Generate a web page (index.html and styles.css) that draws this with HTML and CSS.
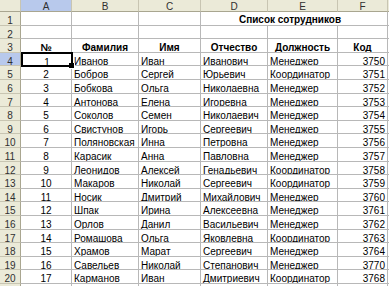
FILE: index.html
```html
<!DOCTYPE html>
<html lang="ru">
<head>
<meta charset="utf-8">
<title>Список сотрудников</title>
<link rel="stylesheet" href="styles.css">
</head>
<body>
<div class="sheet">
  <div class="ch corner"></div><div class="ch sel">A</div><div class="ch">B</div><div class="ch">C</div><div class="ch">D</div><div class="ch">E</div><div class="ch">F</div><div class="ch"></div>

  <div class="rh">1</div><div></div><div></div><div></div><div class="title">Список сотрудников</div><div></div>
  <div class="rh">2</div><div></div><div></div><div></div><div></div><div></div><div></div><div></div>
  <div class="rh">3</div><div class="ctr bold">№</div><div class="ctr bold">Фамилия</div><div class="ctr bold">Имя</div><div class="ctr bold">Отчество</div><div class="ctr bold">Должность</div><div class="ctr bold">Код</div><div></div>
  <div class="rh sel">4</div><div class="ctr active">1</div><div>Иванов</div><div>Иван</div><div>Иванович</div><div>Менеджер</div><div class="r">3750</div><div></div>
  <div class="rh">5</div><div class="ctr">2</div><div>Бобров</div><div>Сергей</div><div>Юрьевич</div><div>Координатор</div><div class="r">3751</div><div></div>
  <div class="rh">6</div><div class="ctr">3</div><div>Бобкова</div><div>Ольга</div><div>Николаевна</div><div>Менеджер</div><div class="r">3752</div><div></div>
  <div class="rh">7</div><div class="ctr">4</div><div>Антонова</div><div>Елена</div><div>Игоревна</div><div>Менеджер</div><div class="r">3753</div><div></div>
  <div class="rh">8</div><div class="ctr">5</div><div>Соколов</div><div>Семен</div><div>Николаевич</div><div>Менеджер</div><div class="r">3754</div><div></div>
  <div class="rh">9</div><div class="ctr">6</div><div>Свистунов</div><div>Игорь</div><div>Сергеевич</div><div>Менеджер</div><div class="r">3755</div><div></div>
  <div class="rh">10</div><div class="ctr">7</div><div>Поляновская</div><div>Инна</div><div>Петровна</div><div>Менеджер</div><div class="r">3756</div><div></div>
  <div class="rh">11</div><div class="ctr">8</div><div>Карасик</div><div>Анна</div><div>Павловна</div><div>Менеджер</div><div class="r">3757</div><div></div>
  <div class="rh">12</div><div class="ctr">9</div><div>Леонидов</div><div>Алексей</div><div>Генадьевич</div><div>Координатор</div><div class="r">3758</div><div></div>
  <div class="rh">13</div><div class="ctr">10</div><div>Макаров</div><div>Николай</div><div>Сергеевич</div><div>Координатор</div><div class="r">3759</div><div></div>
  <div class="rh">14</div><div class="ctr">11</div><div>Носик</div><div>Дмитрий</div><div>Михайлович</div><div>Менеджер</div><div class="r">3760</div><div></div>
  <div class="rh">15</div><div class="ctr">12</div><div>Шпак</div><div>Ирина</div><div>Алексеевна</div><div>Менеджер</div><div class="r">3761</div><div></div>
  <div class="rh">16</div><div class="ctr">13</div><div>Орлов</div><div>Данил</div><div>Васильевич</div><div>Менеджер</div><div class="r">3762</div><div></div>
  <div class="rh">17</div><div class="ctr">14</div><div>Ромашова</div><div>Ольга</div><div>Яковлевна</div><div>Координатор</div><div class="r">3763</div><div></div>
  <div class="rh">18</div><div class="ctr">15</div><div>Храмов</div><div>Марат</div><div>Сергеевич</div><div>Менеджер</div><div class="r">3764</div><div></div>
  <div class="rh">19</div><div class="ctr">16</div><div>Савельев</div><div>Николай</div><div>Степанович</div><div>Менеджер</div><div class="r">3770</div><div></div>
  <div class="rh">20</div><div class="ctr">17</div><div>Карманов</div><div>Иван</div><div>Дмитриевич</div><div>Координатор</div><div class="r">3768</div><div></div>
  <div class="rh"></div><div></div><div></div><div></div><div></div><div></div><div></div><div></div>
</div>
</body>
</html>
```

FILE: styles.css
```css
html, body {
  margin: 0;
  padding: 0;
  background: #ffffff;
  overflow: hidden;
}

body {
  font-family: "Liberation Sans", Arial, sans-serif;
  font-size: 10px;
  color: #000000;
}

.sheet {
  display: grid;
  grid-template-columns: 21px 51px 67px 62px 67px 70px 50px 1fr;
  grid-template-rows: 12px repeat(21, 13.6px);
  width: 389px;
}

.sheet > div {
  box-sizing: border-box;
  border-right: 1px solid #b8b8b8;
  border-bottom: 1px solid #b8b8b8;
  white-space: nowrap;
  overflow: hidden;
  padding: 4px 2px 0 2px;
  line-height: 10px;
}

.sheet > .ch {
  background: #ebead8;
  border-right-color: #c8c5b2;
  border-bottom-color: #a9a690;
  color: #303030;
  text-align: center;
  padding: 2px 0 0 0;
}

.sheet > .rh {
  background: #ebead8;
  border-right-color: #a9a690;
  border-bottom-color: #c8c5b2;
  color: #303030;
  text-align: center;
  padding: 4px 0 0 0;
}

.sheet > .sel {
  background: #b8c9ec;
}

.ctr {
  text-align: center;
}

.r {
  text-align: right;
}

.bold {
  font-weight: bold;
}

.sheet > .title {
  grid-column: span 3;
  text-align: center;
  font-weight: bold;
  padding-right: 10px;
  padding-top: 3px;
}

.sheet > .active {
  position: relative;
  overflow: visible;
  z-index: 2;
  border: 2px solid #000000;
  margin: -1px -1px -1px 0;
  padding-top: 4px;
  background: #ffffff;
}

.active::after {
  content: "";
  position: absolute;
  right: -4px;
  bottom: -4px;
  width: 5px;
  height: 5px;
  background: #000000;
  border-right: 1px solid #ffffff;
  border-bottom: 1px solid #ffffff;
}
```
